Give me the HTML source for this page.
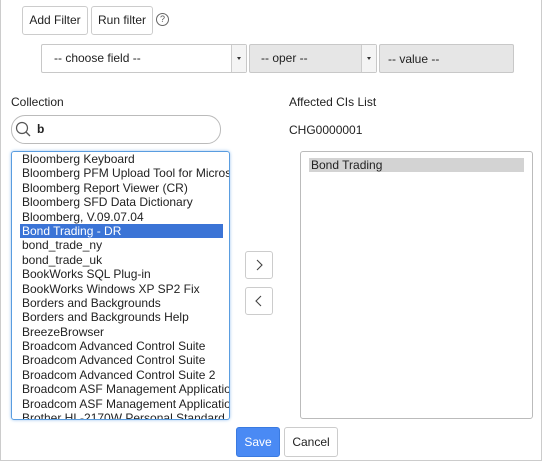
<!DOCTYPE html>
<html><head><style>
body{margin:0;width:543px;height:462px;background:#fff;font-family:"Liberation Sans",Arial,sans-serif;font-size:12px;color:#222;position:relative;overflow:hidden}
.frame{position:absolute;left:0;top:-2px;width:540px;height:461px;border:1px solid #ccc}
.a{position:absolute;box-sizing:border-box}
.btn{border:1px solid #ccc;border-radius:3px;background:#fff;text-align:center;font-size:12px;line-height:26px}
.sel{border:1px solid #c8c8c8;border-radius:2px}
.arr{position:absolute;top:0;width:14px;height:26px;border-left:1px solid #ccc;background:#f4f4f4}
.arr:after{content:"";position:absolute;left:5px;top:12px;border:2px solid transparent;border-top:3px solid #333}
.list div{height:14.4px;line-height:14.4px;padding-left:10px;white-space:nowrap;font-size:12px}
</style></head><body>
<div class="frame"></div>
<div class="a btn" style="left:22px;top:6px;width:66px;height:29px">Add Filter</div>
<div class="a btn" style="left:91px;top:6px;width:62px;height:29px">Run filter</div>
<div class="a" style="left:156px;top:13px;width:13px;height:13px;border:1px solid #666;border-radius:50%;font-size:9px;line-height:11px;text-align:center;color:#555">?</div>
<div class="a sel" style="left:41px;top:44px;width:206px;height:29px;background:#fff;padding:6px 0 0 12px">-- choose field --<div class="arr" style="right:0;top:0;height:27px"></div></div>
<div class="a sel" style="left:249px;top:44px;width:128px;height:29px;background:#e6e6e6;padding:6px 0 0 11px">-- oper --<div class="arr" style="right:0;top:0;height:27px"></div></div>
<div class="a sel" style="left:379px;top:44px;width:135px;height:29px;background:#e6e6e6;padding:7px 0 0 8px">-- value --</div>
<div class="a" style="left:11px;top:95px">Collection</div>
<div class="a" style="left:289px;top:95px">Affected CIs List</div>
<div class="a" style="left:289px;top:123px">CHG0000001</div>
<div class="a" style="left:11px;top:115px;width:210px;height:29px;border:1px solid #bbb;border-radius:14px"></div>
<svg class="a" style="left:14px;top:120px" width="20" height="20"><circle cx="8" cy="8" r="5.5" fill="none" stroke="#555" stroke-width="1.2"/><line x1="12" y1="12" x2="16" y2="16" stroke="#555" stroke-width="1.3"/></svg>
<div class="a" style="left:37px;top:122px;font-weight:bold">b</div>
<div class="a list" style="left:11px;top:151px;width:219px;height:269px;border:1px solid #5a9de0;border-radius:3px;box-shadow:0 0 3px #9cc5f0;overflow:hidden;padding-top:0">
<div>Bloomberg Keyboard</div><div>Bloomberg PFM Upload Tool for Microsoft</div><div>Bloomberg Report Viewer (CR)</div><div>Bloomberg SFD Data Dictionary</div><div>Bloomberg, V.09.07.04</div>
<div style="background:#3b74d6;color:#fff;margin-left:8px;width:201px;padding-left:2px">Bond Trading - DR</div>
<div>bond_trade_ny</div><div>bond_trade_uk</div><div>BookWorks SQL Plug-in</div><div>BookWorks Windows XP SP2 Fix</div><div>Borders and Backgrounds</div><div>Borders and Backgrounds Help</div><div>BreezeBrowser</div><div>Broadcom Advanced Control Suite</div><div>Broadcom Advanced Control Suite</div><div>Broadcom Advanced Control Suite 2</div><div>Broadcom ASF Management Application</div><div>Broadcom ASF Management Application</div><div>Brother HL-2170W Personal Standard M</div>
</div>
<div class="a btn" style="left:245px;top:251px;width:28px;height:28px"></div>
<svg class="a" style="left:245px;top:251px" width="28" height="28"><path d="M12 9 L17 14 L12 19" fill="none" stroke="#444" stroke-width="1.1"/></svg>
<div class="a btn" style="left:245px;top:287px;width:28px;height:28px"></div>
<svg class="a" style="left:245px;top:287px" width="28" height="28"><path d="M16 9 L11 14 L16 19" fill="none" stroke="#444" stroke-width="1.1"/></svg>
<div class="a" style="left:300px;top:151px;width:233px;height:268px;border:1px solid #bbb;border-radius:3px"></div>
<div class="a" style="left:309px;top:158px;width:215px;height:14px;background:#d3d3d3;padding-left:2px;line-height:14px">Bond Trading</div>
<div class="a btn" style="left:236px;top:427px;width:44px;height:30px;background:#4a8af4;border-color:#3a7ae0;color:#fff;line-height:28px">Save</div>
<div class="a btn" style="left:284px;top:427px;width:54px;height:30px;line-height:28px">Cancel</div>
</body></html>
